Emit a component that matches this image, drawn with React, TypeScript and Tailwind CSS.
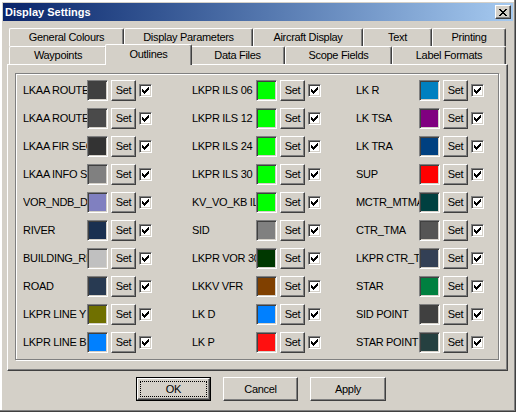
import React from 'react';

type Item = { label: string; color: string };

const COLUMNS: Item[][] = [
  [
    { label: 'LKAA ROUTE', color: '#404040' },
    { label: 'LKAA ROUTE', color: '#4a4a4a' },
    { label: 'LKAA FIR SECTOR', color: '#333333' },
    { label: 'LKAA INFO SECTOR', color: '#808080' },
    { label: 'VOR_NDB_DME', color: '#8080c0' },
    { label: 'RIVER', color: '#1a3050' },
    { label: 'BUILDING_RES', color: '#c0c0c0' },
    { label: 'ROAD', color: '#283a52' },
    { label: 'LKPR LINE Y', color: '#707000' },
    { label: 'LKPR LINE B', color: '#0080ff' },
  ],
  [
    { label: 'LKPR ILS 06', color: '#00ff00' },
    { label: 'LKPR ILS 12', color: '#00ff00' },
    { label: 'LKPR ILS 24', color: '#00ff00' },
    { label: 'LKPR ILS 30', color: '#00ff00' },
    { label: 'KV_VO_KB ILS', color: '#00ff00' },
    { label: 'SID', color: '#808080' },
    { label: 'LKPR VOR 30', color: '#003800' },
    { label: 'LKKV VFR', color: '#804000' },
    { label: 'LK D', color: '#0080ff' },
    { label: 'LK P', color: '#ff1010' },
  ],
  [
    { label: 'LK R', color: '#0080c0' },
    { label: 'LK TSA', color: '#800080' },
    { label: 'LK TRA', color: '#004080' },
    { label: 'SUP', color: '#ff0000' },
    { label: 'MCTR_MTMA', color: '#004040' },
    { label: 'CTR_TMA', color: '#555555' },
    { label: 'LKPR CTR_TMA', color: '#334055' },
    { label: 'STAR', color: '#008040' },
    { label: 'SID POINT', color: '#404040' },
    { label: 'STAR POINT', color: '#254040' },
  ],
];

const BACK_TABS = [
  { label: 'General Colours', w: 'w-[115px]' },
  { label: 'Display Parameters', w: 'w-[129px]' },
  { label: 'Aircraft Display', w: 'w-[110px]' },
  { label: 'Text', w: 'w-[69px]' },
  { label: 'Printing', w: 'w-[74px]' },
];

const raised =
  'border border-t-white border-l-white border-r-[#404040] border-b-[#404040] shadow-[inset_-1px_-1px_0_#808080]';
const sunken =
  'border border-t-[#808080] border-l-[#808080] border-r-white border-b-white shadow-[inset_1px_1px_0_#404040,inset_-1px_-1px_0_#d4d0c8]';

function Tab({ label, className }: { label: string; className: string }) {
  return (
    <div
      className={`h-[18px] flex items-center justify-center bg-[#d4d0c8] border-t border-l border-r border-t-white border-l-white border-r-[#404040] rounded-tl-[2px] rounded-tr-[2px] shadow-[inset_-1px_0_0_#808080] ${className}`}
    >
      {label}
    </div>
  );
}

function CheckMark() {
  return (
    <svg width="7" height="7" viewBox="0 0 7 7" shapeRendering="crispEdges">
      <path
        fill="#000"
        d="M6 0h1v1h-1z M5 1h2v1h-2z M0 2h1v1h-1z M4 2h3v1h-3z M0 3h2v1h-2z M3 3h3v1h-3z M0 4h5v1h-5z M1 5h3v1h-3z M2 6h1v1h-1z"
      />
    </svg>
  );
}

function ColourRow({ item, labelW }: { item: Item; labelW: string }) {
  return (
    <div className="flex items-center h-[21px]">
      <div className={`${labelW} overflow-hidden whitespace-nowrap`}>{item.label}</div>
      <div className={`w-[21px] h-[21px] ${sunken}`} style={{ backgroundColor: item.color }} />
      <div className={`ml-[3px] w-[25px] h-[21px] flex items-center justify-center ${raised}`}>Set</div>
      <div className={`ml-[3px] w-[13px] h-[13px] bg-white flex items-center justify-center ${sunken}`}>
        <CheckMark />
      </div>
    </div>
  );
}

export default function App() {
  return (
    <div
      className="w-[516px] h-[412px] bg-[#d4d0c8] p-[3px] text-[11px] tracking-[-0.3px] text-black shadow-[inset_-1px_-1px_0_#404040,inset_-2px_-2px_0_#808080,inset_2px_2px_0_#ffffff]"
      style={{ fontFamily: '"Liberation Sans", Arial, sans-serif' }}
    >
      {/* Title bar */}
      <div className="h-[18px] flex items-center justify-between pl-[2px] pr-[2px] bg-linear-to-r from-[#0a246a] to-[#a6caf0]">
        <span className="font-bold text-white tracking-normal">Display Settings</span>
        <div className={`w-[16px] h-[14px] bg-[#d4d0c8] flex items-center justify-center ${raised}`}>
          <svg width="8" height="7" viewBox="0 0 8 7" shapeRendering="crispEdges">
            <path
              fill="#000"
              d="M0 0h2v1h-2z M6 0h2v1h-2z M1 1h2v1h-2z M5 1h2v1h-2z M2 2h4v1h-4z M3 3h2v1h-2z M2 4h4v1h-4z M1 5h2v1h-2z M5 5h2v1h-2z M0 6h2v1h-2z M6 6h2v1h-2z"
            />
          </svg>
        </div>
      </div>

      {/* Tabs */}
      <div className="mt-[7px] ml-[4px] w-[501px]">
        <div className="flex h-[18px] pl-[2px]">
          {BACK_TABS.map((t) => (
            <Tab key={t.label} label={t.label} className={t.w} />
          ))}
        </div>
        <div className="flex h-[18px] pl-[2px]">
          <Tab label="Waypoints" className="w-[98px]" />
          <div className="relative z-10 -mx-[2px] -mt-[2px] w-[87px] h-[21px] pb-[2px] flex items-center justify-center bg-[#d4d0c8] border-t border-l border-r border-t-white border-l-white border-r-[#404040] rounded-tl-[2px] rounded-tr-[2px] shadow-[inset_-1px_0_0_#808080]">
            Outlines
          </div>
          <Tab label="Data Files" className="w-[95px]" />
          <Tab label="Scope Fields" className="w-[107px]" />
          <Tab label="Label Formats" className="w-[114px]" />
        </div>

        {/* Panel */}
        <div className="h-[307px] pl-[7px] pt-[8px] border border-t-white border-l-white border-r-[#404040] border-b-[#404040] shadow-[inset_-1px_-1px_0_#808080]">
          <div className="w-[484px] h-[287px] pt-[6px] pl-[7px] border border-[#808080] shadow-[inset_1px_1px_0_#ffffff,1px_1px_0_#ffffff]">
            <div className="grid grid-cols-[169px_164px_1fr]">
              {COLUMNS.map((col, ci) => (
                <div key={ci} className="flex flex-col gap-[7px]">
                  {col.map((item, ri) => (
                    <ColourRow key={ri} item={item} labelW={ci === 2 ? 'w-[63px]' : 'w-[64px]'} />
                  ))}
                </div>
              ))}
            </div>
          </div>
        </div>
      </div>

      {/* Dialog buttons */}
      <div className="mt-[6px] ml-[133px] flex gap-[12px]">
        <div className="w-[75px] h-[24px] border border-black">
          <div className={`w-full h-full p-[2px] ${raised}`}>
            <div className="w-full h-full flex items-center justify-center border border-dotted border-black">OK</div>
          </div>
        </div>
        <div className={`w-[75px] h-[24px] flex items-center justify-center ${raised}`}>Cancel</div>
        <div className={`w-[76px] h-[24px] flex items-center justify-center ${raised}`}>Apply</div>
      </div>
    </div>
  );
}
